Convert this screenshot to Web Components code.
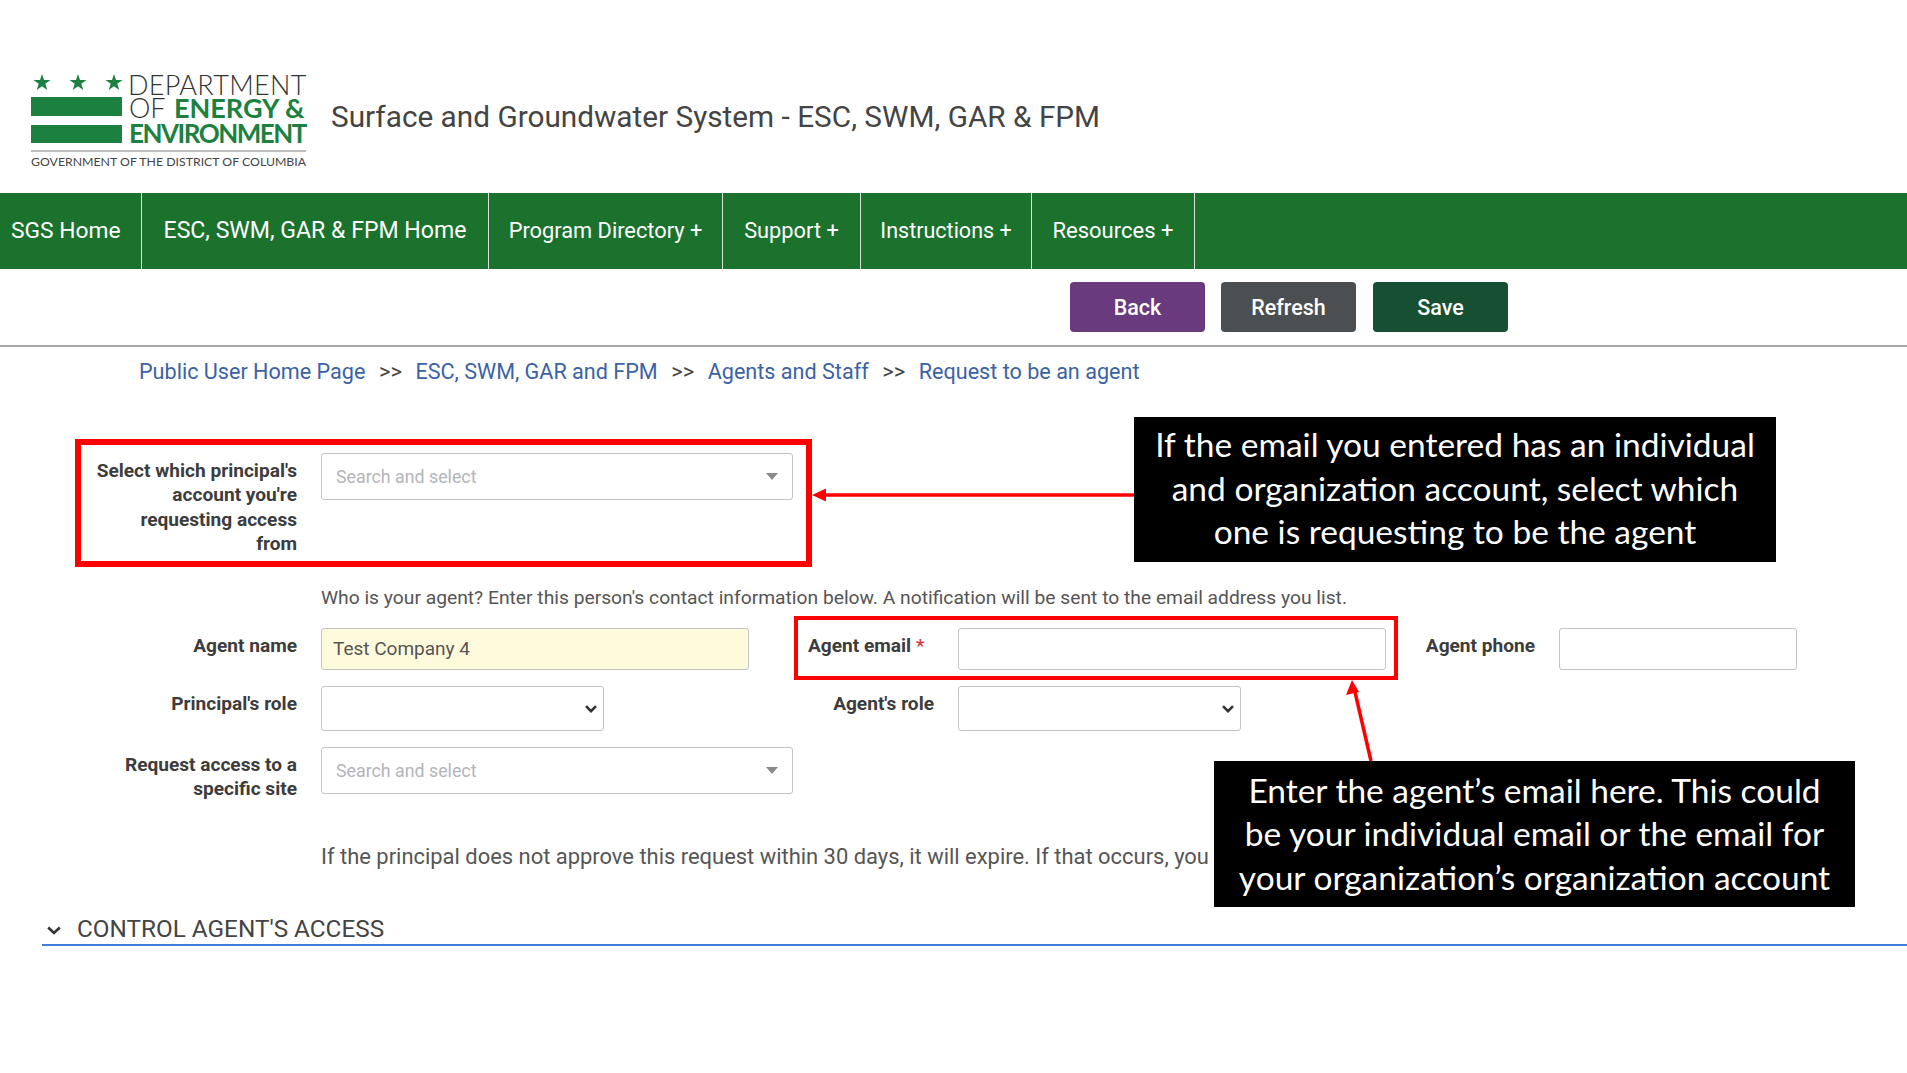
<!DOCTYPE html>
<html lang="en">
<head>
<meta charset="utf-8">
<title>Request to be an agent</title>
<style>
  html, body { margin: 0; background: #fff; }
  body { position: relative; width: 1907px; height: 1073px; overflow: hidden; font-family: Roboto, "Liberation Sans", sans-serif; color: #444; }
</style>
</head>
<body>
<dc-header title-text="Surface and Groundwater System - ESC, SWM, GAR &amp; FPM"></dc-header>
<dc-nav>
  <dc-nav-item style="width:142px;font-size:22.8px" first>SGS Home</dc-nav-item>
  <dc-nav-item style="width:347px;font-size:23.1px">ESC, SWM, GAR &amp; FPM Home</dc-nav-item>
  <dc-nav-item style="width:234px;font-size:21.8px">Program Directory +</dc-nav-item>
  <dc-nav-item style="width:138px;font-size:21.8px">Support +</dc-nav-item>
  <dc-nav-item style="width:171px;font-size:21.5px">Instructions +</dc-nav-item>
  <dc-nav-item style="width:163px">Resources +</dc-nav-item>
</dc-nav>
<dc-toolbar>
  <dc-button color="#6a3a7f">Back</dc-button>
  <dc-button color="#4c4f51">Refresh</dc-button>
  <dc-button color="#174f33" style="margin-left:1px">Save</dc-button>
</dc-toolbar>
<dc-breadcrumb>
  <a>Public User Home Page</a><i>&gt;&gt;</i><a>ESC, SWM, GAR and FPM</a><i>&gt;&gt;</i><a>Agents and Staff</a><i>&gt;&gt;</i><a>Request to be an agent</a>
</dc-breadcrumb>
<dc-form>
  <dc-row>
    <dc-label style="width:222px">Select which principal's<br>account you're<br>requesting access<br>from</dc-label>
    <dc-search-select style="width:472px;height:47px"></dc-search-select>
  </dc-row>
  <dc-note style="margin-top:29px;font-size:19.25px">Who is your agent? Enter this person's contact information below. A notification will be sent to the email address you list.</dc-note>
  <dc-row style="margin-top:18px">
    <dc-label style="width:222px">Agent name</dc-label>
    <dc-text-input style="width:428px" value="Test Company 4" filled></dc-text-input>
    <dc-label style="width:173px;margin-left:12px" left><span style="padding-left:47px">Agent email <b style="color:#d9343a;font-weight:500">*</b></span></dc-label>
    <dc-text-input style="width:428px"></dc-text-input>
    <dc-label style="width:149px">Agent phone</dc-label>
    <dc-text-input style="width:238px"></dc-text-input>
  </dc-row>
  <dc-row style="margin-top:16px">
    <dc-label style="width:222px">Principal's role</dc-label>
    <dc-dropdown style="width:283px"></dc-dropdown>
    <dc-label style="width:330px">Agent's role</dc-label>
    <dc-dropdown style="width:283px"></dc-dropdown>
  </dc-row>
  <dc-row style="margin-top:16px">
    <dc-label style="width:222px">Request access to a<br>specific site</dc-label>
    <dc-search-select style="width:472px;height:47px"></dc-search-select>
  </dc-row>
  <dc-note style="margin-top:44px;font-size:21.93px">If the principal does not approve this request within 30 days, it will expire. If that occurs, you</dc-note>
</dc-form>
<dc-section>CONTROL AGENT'S ACCESS</dc-section>

<dc-annotations></dc-annotations>

<script>
// small helper so every component gets an open shadow root from one string
function shadow(el, html) {
  el.attachShadow({ mode: "open" }).innerHTML = html;
}

class DcHeader extends HTMLElement {
  connectedCallback() {
    shadow(this, `
      <style>
        :host { display: flex; align-items: flex-start; height: 193px; box-sizing: border-box; padding: 60px 0 0 30px; }
        svg { display: block; flex: none; }
        h1 { margin: 39px 0 0 21px; font: 400 29.75px/36px Roboto, sans-serif; color: #444; white-space: nowrap; }
      </style>
      <svg width="280" height="120" viewBox="30 60 280 120">
        <g fill="#1c8140">
          <polygon points="42,74 44,80 50.5,80 45.3,83.8 47.3,90 42,86.2 36.7,90 38.7,83.8 33.5,80 40,80"/>
          <polygon points="78,74 80,80 86.5,80 81.3,83.8 83.3,90 78,86.2 72.7,90 74.7,83.8 69.5,80 76,80"/>
          <polygon points="114,74 116,80 122.5,80 117.3,83.8 119.3,90 114,86.2 108.7,90 110.7,83.8 105.5,80 112,80"/>
          <rect x="31" y="97" width="91" height="19"/>
          <rect x="31" y="125" width="91" height="18"/>
        </g>
        <g font-family="Lato, sans-serif">
          <text x="128" y="95" font-size="27" font-weight="300" fill="#333" letter-spacing="0.3">DEPARTMENT</text>
          <text x="129" y="118" font-size="27" font-weight="300" fill="#333">OF</text>
          <text x="174" y="118" font-size="27" font-weight="700" fill="#1c8140">ENERGY &amp;</text>
          <text x="129" y="143" font-size="26" font-weight="700" fill="#1c8140" letter-spacing="-1.5">ENVIRONMENT</text>
          <text x="31" y="166" font-size="12.3" font-weight="400" fill="#444">GOVERNMENT OF THE DISTRICT OF COLUMBIA</text>
        </g>
        <rect x="31" y="150" width="275" height="2" fill="#bdbdbd"/>
      </svg>
      <h1>${this.getAttribute("title-text")}</h1>`);
  }
}

class DcNav extends HTMLElement {
  connectedCallback() {
    shadow(this, `
      <style>
        :host { display: flex; height: 76px; background: #1a722c; }
      </style>
      <slot></slot>`);
  }
}

class DcNavItem extends HTMLElement {
  connectedCallback() {
    shadow(this, `
      <style>
        :host { display: flex; align-items: center; justify-content: center; box-sizing: border-box; height: 100%; padding-bottom: 2px; border-right: 1.5px solid #d8e4da; color: #fff; font: 400 22px Roboto, sans-serif; white-space: nowrap; }
        :host([first]) { justify-content: flex-start; padding-left: 11px; }
      </style>
      <slot></slot>`);
  }
}

class DcToolbar extends HTMLElement {
  connectedCallback() {
    shadow(this, `
      <style>
        :host { display: flex; gap: 16px; box-sizing: border-box; height: 78px; padding: 13px 0 0 1070px; border-bottom: 2px solid #a5a5a5; }
      </style>
      <slot></slot>`);
  }
}

class DcButton extends HTMLElement {
  connectedCallback() {
    shadow(this, `
      <style>
        :host { display: flex; align-items: center; justify-content: center; width: 135px; height: 50px; border-radius: 4px; background: ${this.getAttribute("color")}; color: #fff; font: 500 21.5px Roboto, sans-serif; }
      </style>
      <slot></slot>`);
  }
}

class DcBreadcrumb extends HTMLElement {
  connectedCallback() {
    shadow(this, `
      <style>
        :host { display: flex; height: 106px; padding: 11px 0 0 139px; box-sizing: border-box; font: 400 21.6px/28px Roboto, sans-serif; color: #3b62a6; white-space: nowrap; }
        ::slotted(i) { font-style: normal; color: #444; margin: 0 13.5px; font-size: 22px; }
      </style>
      <slot></slot>`);
  }
}

class DcForm extends HTMLElement {
  connectedCallback() {
    shadow(this, `
      <style>
        :host { display: block; padding-left: 75px; }
      </style>
      <slot></slot>`);
  }
}

class DcRow extends HTMLElement {
  connectedCallback() {
    shadow(this, `
      <style>
        :host { display: flex; align-items: flex-start; }
      </style>
      <slot></slot>`);
  }
}

class DcLabel extends HTMLElement {
  connectedCallback() {
    shadow(this, `
      <style>
        :host { display: block; flex: none; box-sizing: border-box; padding-top: 6px; margin-right: 24px; text-align: right; font: 700 19.1px/24.4px Roboto, sans-serif; color: #3c3c3c; white-space: nowrap; }
        :host([left]) { text-align: left; }
      </style>
      <slot></slot>`);
  }
}

class DcNote extends HTMLElement {
  connectedCallback() {
    shadow(this, `
      <style>
        :host { display: block; padding-left: 246px; font: 400 18.5px/24px Roboto, sans-serif; color: #555; white-space: nowrap; }
      </style>
      <slot></slot>`);
  }
}

class DcTextInput extends HTMLElement {
  connectedCallback() {
    shadow(this, `
      <style>
        :host { display: flex; flex: none; align-items: center; box-sizing: border-box; height: 42px; padding: 0 11px; border: 1.5px solid #c4c4c4; border-radius: 3px; font: 400 19px Roboto, sans-serif; color: #555; background: #fff; }
        :host([filled]) { background: #fefbdc; }
      </style>
      <span>${this.getAttribute("value") || ""}</span>`);
  }
}

class DcDropdown extends HTMLElement {
  connectedCallback() {
    shadow(this, `
      <style>
        :host { display: flex; flex: none; align-items: center; justify-content: flex-end; box-sizing: border-box; height: 45px; padding-right: 6px; border: 1.5px solid #c4c4c4; border-radius: 3px; background: #fff; }
        svg { display: block; margin-top: 1px; }
      </style>
      <svg width="12" height="8" viewBox="0 0 12 8"><path d="M1 1.2 6 6.2 11 1.2" fill="none" stroke="#333" stroke-width="2.6"/></svg>`);
  }
}

class DcSearchSelect extends HTMLElement {
  connectedCallback() {
    shadow(this, `
      <style>
        :host { display: flex; flex: none; align-items: center; justify-content: space-between; box-sizing: border-box; padding: 0 14px; border: 1.5px solid #c4c4c4; border-radius: 3px; background: #fff; font: 400 17.8px Roboto, sans-serif; color: #b4b4ba; }
        i { width: 0; height: 0; border: 6px solid transparent; border-top: 7px solid #8a8a8a; border-bottom: 0; }
      </style>
      <span>Search and select</span><i></i>`);
  }
}

class DcSection extends HTMLElement {
  connectedCallback() {
    shadow(this, `
      <style>
        :host { display: flex; align-items: center; gap: 16px; box-sizing: border-box; height: 32px; margin: 45px 0 0 42px; padding-left: 5px; border-bottom: 2px solid #3f7fdc; font: 400 24.3px/30px Roboto, sans-serif; color: #444; }
        svg { display: block; flex: none; margin-top: 3px; }
      </style>
      <svg width="14" height="9" viewBox="0 0 14 9"><path d="M1.2 1.5 7 7 12.8 1.5" fill="none" stroke="#333" stroke-width="2.6"/></svg>
      <slot></slot>`);
  }
}

// red boxes, arrows and black callouts drawn over the page
class DcAnnotations extends HTMLElement {
  connectedCallback() {
    shadow(this, `
      <style>
        :host { position: absolute; inset: 0; pointer-events: none; }
        svg { position: absolute; left: 0; top: 0; }
        .box { position: absolute; box-sizing: border-box; border: 5px solid #f00; }
        .call { position: absolute; box-sizing: border-box; display: flex; flex-direction: column; justify-content: center; background: #000; color: #fff; text-align: center; font: 400 33.5px/43.6px Lato, sans-serif; white-space: nowrap; }
      </style>
      <div class="box" style="left:75px;top:439px;width:737px;height:128px;border-width:6px"></div>
      <div class="box" style="left:794px;top:616px;width:604px;height:64px;border-width:4.5px"></div>
      <svg width="1907" height="1073" viewBox="0 0 1907 1073">
        <path d="M1134 495H822" stroke="#f00" stroke-width="3.5" fill="none"/>
        <path d="M812 495 826 488.5V501.5Z" fill="#f00"/>
        <path d="M1371 761 1355 692" stroke="#f00" stroke-width="3.5" fill="none"/>
        <path d="M1352 680 1346 695 1359 692Z" fill="#f00"/>
      </svg>
      <div class="call" style="left:1134px;top:417px;width:642px;height:145px;padding-bottom:2px">
        <div>If the email you entered has an individual</div>
        <div>and organization account, select which</div>
        <div>one is requesting to be the agent</div>
      </div>
      <div class="call" style="left:1214px;top:761px;width:641px;height:146px">
        <div>Enter the agent’s email here. This could</div>
        <div>be your individual email or the email for</div>
        <div>your organization’s organization account</div>
      </div>`);
  }
}

customElements.define("dc-header", DcHeader);
customElements.define("dc-nav", DcNav);
customElements.define("dc-nav-item", DcNavItem);
customElements.define("dc-toolbar", DcToolbar);
customElements.define("dc-button", DcButton);
customElements.define("dc-breadcrumb", DcBreadcrumb);
customElements.define("dc-form", DcForm);
customElements.define("dc-row", DcRow);
customElements.define("dc-label", DcLabel);
customElements.define("dc-note", DcNote);
customElements.define("dc-text-input", DcTextInput);
customElements.define("dc-dropdown", DcDropdown);
customElements.define("dc-search-select", DcSearchSelect);
customElements.define("dc-section", DcSection);
customElements.define("dc-annotations", DcAnnotations);
</script>
</body>
</html>
